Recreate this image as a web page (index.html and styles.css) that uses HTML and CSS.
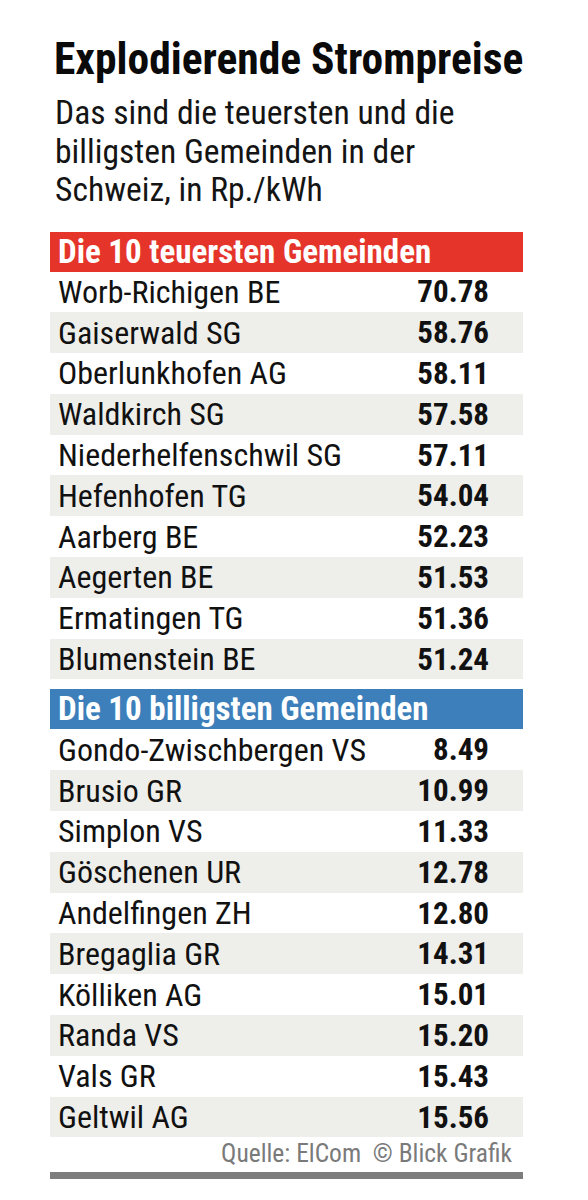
FILE: index.html
```html
<!DOCTYPE html>
<html lang="de">
<head>
<meta charset="utf-8">
<title>Explodierende Strompreise</title>
<link rel="stylesheet" href="styles.css">
</head>
<body>
<div class="graphic">
  <h1 class="title">Explodierende Strompreise</h1>
  <p class="subtitle">Das sind die teuersten und die billigsten Gemeinden in der Schweiz, in Rp./kWh</p>

  <div class="section">
    <div class="section-head red">Die 10 teuersten Gemeinden</div>
    <div class="row"><span class="name">Worb-Richigen BE</span><span class="val">70.78</span></div>
    <div class="row alt"><span class="name">Gaiserwald SG</span><span class="val">58.76</span></div>
    <div class="row"><span class="name">Oberlunkhofen AG</span><span class="val">58.11</span></div>
    <div class="row alt"><span class="name">Waldkirch SG</span><span class="val">57.58</span></div>
    <div class="row"><span class="name">Niederhelfenschwil SG</span><span class="val">57.11</span></div>
    <div class="row alt"><span class="name">Hefenhofen TG</span><span class="val">54.04</span></div>
    <div class="row"><span class="name">Aarberg BE</span><span class="val">52.23</span></div>
    <div class="row alt"><span class="name">Aegerten BE</span><span class="val">51.53</span></div>
    <div class="row"><span class="name">Ermatingen TG</span><span class="val">51.36</span></div>
    <div class="row alt"><span class="name">Blumenstein BE</span><span class="val">51.24</span></div>
  </div>

  <div class="section">
    <div class="section-head blue">Die 10 billigsten Gemeinden</div>
    <div class="row"><span class="name">Gondo-Zwischbergen VS</span><span class="val">8.49</span></div>
    <div class="row alt"><span class="name">Brusio GR</span><span class="val">10.99</span></div>
    <div class="row"><span class="name">Simplon VS</span><span class="val">11.33</span></div>
    <div class="row alt"><span class="name">Göschenen UR</span><span class="val">12.78</span></div>
    <div class="row"><span class="name">Andelfingen ZH</span><span class="val">12.80</span></div>
    <div class="row alt"><span class="name">Bregaglia GR</span><span class="val">14.31</span></div>
    <div class="row"><span class="name">Kölliken AG</span><span class="val">15.01</span></div>
    <div class="row alt"><span class="name">Randa VS</span><span class="val">15.20</span></div>
    <div class="row"><span class="name">Vals GR</span><span class="val">15.43</span></div>
    <div class="row alt"><span class="name">Geltwil AG</span><span class="val">15.56</span></div>
  </div>

  <p class="source">Quelle: ElCom &nbsp;© Blick Grafik</p>
  <div class="rule"></div>
</div>
</body>
</html>
```
FILE: styles.css
```css
html, body {
  margin: 0;
  padding: 0;
  background: #ffffff;
}

body {
  font-family: Roboto, "Liberation Sans", sans-serif;
  font-stretch: 75%;
  color: #111111;
}

.graphic {
  width: 473px;
  margin-left: 50px;
  padding-top: 36px;
}

.title {
  margin: 0;
  padding-left: 4px;
  font-size: 43.5px;
  font-weight: 700;
  line-height: 48px;
  white-space: nowrap;
  color: #0a0a0a;
}

.subtitle {
  margin: 10px 0 0;
  padding-left: 5px;
  padding-right: 20px;
  font-size: 33.6px;
  line-height: 38.5px;
  color: #141414;
}

.section {
  margin-top: 22px;
}

.section + .section {
  margin-top: 10px;
}

.section-head {
  height: 40px;
  line-height: 40px;
  padding-left: 8px;
  font-size: 33px;
  font-weight: 700;
  color: #ffffff;
}

.red {
  background: #e5352a;
}

.blue {
  background: #3d7fba;
}

.row {
  display: flex;
  justify-content: space-between;
  align-items: center;
  height: 40.8px;
  padding: 0 34px 0 8px;
  font-size: 31px;
}

.alt {
  background: #eeeeea;
}

.name {
  font-size: 32px;
}

.val {
  font-weight: 700;
}

.source {
  margin: 0;
  padding-right: 11px;
  text-align: right;
  font-size: 25.5px;
  line-height: 32px;
  color: #7a7a7a;
}

.rule {
  height: 7px;
  margin-top: 3px;
  background: #7d7d7d;
}
```
